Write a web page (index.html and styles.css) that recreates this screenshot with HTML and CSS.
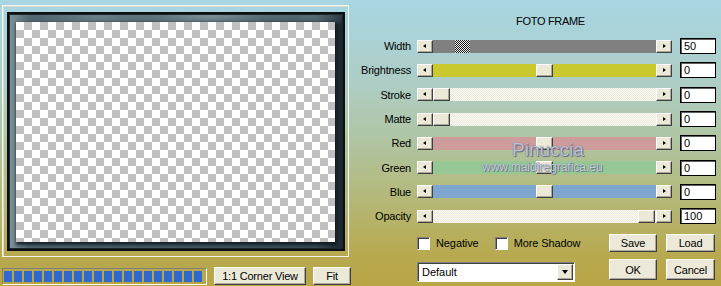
FILE: index.html
```html
<!DOCTYPE html>
<html lang="en">
<head>
    <meta charset="UTF-8">
    <meta name="viewport" content="width=device-width, initial-scale=1.0">
    <title>Foto Frame</title>
    <link rel="stylesheet" href="styles.css">
</head>
<body>
    <div class="app">
        <!-- preview on the left -->
        <section class="preview-pane">
            <div class="preview-box">
                <div class="frame">
                    <div class="checker"></div>
                </div>
            </div>
            <div class="preview-bar">
                <div class="progress">
                    <span></span><span></span><span></span><span></span><span></span>
                    <span></span><span></span><span></span><span></span><span></span>
                    <span></span><span></span><span></span><span></span><span></span>
                    <span></span><span></span><span></span><span></span><span></span>
                </div>
                <button class="btn btn-corner">1:1 Corner View</button>
                <button class="btn btn-fit">Fit</button>
            </div>
        </section>

        <!-- sliders on the right -->
        <section class="controls">
            <h1 class="title">FOTO FRAME</h1>
            <div class="sliders">
                <div class="row">
                    <label>Width</label>
                    <div class="slider">
                        <span class="arrow arrow-left"></span>
                        <div class="track track-gray"><span class="thumb thumb-focus" style="left: 22px;"></span></div>
                        <span class="arrow arrow-right"></span>
                    </div>
                    <div class="value">50</div>
                </div>
                <div class="row">
                    <label>Brightness</label>
                    <div class="slider">
                        <span class="arrow arrow-left"></span>
                        <div class="track track-yellow"><span class="thumb" style="left: 103px;"></span></div>
                        <span class="arrow arrow-right"></span>
                    </div>
                    <div class="value">0</div>
                </div>
                <div class="row">
                    <label>Stroke</label>
                    <div class="slider">
                        <span class="arrow arrow-left"></span>
                        <div class="track track-light"><span class="thumb" style="left: 0px;"></span></div>
                        <span class="arrow arrow-right"></span>
                    </div>
                    <div class="value">0</div>
                </div>
                <div class="row">
                    <label>Matte</label>
                    <div class="slider">
                        <span class="arrow arrow-left"></span>
                        <div class="track track-light"><span class="thumb" style="left: 0px;"></span></div>
                        <span class="arrow arrow-right"></span>
                    </div>
                    <div class="value">0</div>
                </div>
                <div class="row">
                    <label>Red</label>
                    <div class="slider">
                        <span class="arrow arrow-left"></span>
                        <div class="track track-red"><span class="thumb" style="left: 103px;"></span></div>
                        <span class="arrow arrow-right"></span>
                    </div>
                    <div class="value">0</div>
                </div>
                <div class="row">
                    <label>Green</label>
                    <div class="slider">
                        <span class="arrow arrow-left"></span>
                        <div class="track track-green"><span class="thumb" style="left: 103px;"></span></div>
                        <span class="arrow arrow-right"></span>
                    </div>
                    <div class="value">0</div>
                </div>
                <div class="row">
                    <label>Blue</label>
                    <div class="slider">
                        <span class="arrow arrow-left"></span>
                        <div class="track track-blue"><span class="thumb" style="left: 103px;"></span></div>
                        <span class="arrow arrow-right"></span>
                    </div>
                    <div class="value">0</div>
                </div>
                <div class="row">
                    <label>Opacity</label>
                    <div class="slider">
                        <span class="arrow arrow-left"></span>
                        <div class="track track-light"><span class="thumb" style="left: 205px;"></span></div>
                        <span class="arrow arrow-right"></span>
                    </div>
                    <div class="value">100</div>
                </div>
            </div>

            <div class="actions">
                <div class="checks">
                    <span class="check"><span class="box"></span>Negative</span>
                    <span class="check"><span class="box"></span>More Shadow</span>
                </div>
                <div class="buttons">
                    <button class="btn btn-small">Save</button>
                    <button class="btn btn-small btn-wide">Load</button>
                </div>
            </div>
            <div class="actions actions-last">
                <div class="dropdown">
                    <span>Default</span>
                    <span class="drop-arrow"></span>
                </div>
                <div class="buttons">
                    <button class="btn btn-big">OK</button>
                    <button class="btn btn-big btn-wide">Cancel</button>
                </div>
            </div>

            <div class="watermark">
                <div class="wm-name">Pinuccia</div>
                <div class="wm-url">www.maidiregrafica.eu</div>
            </div>
        </section>
    </div>
</body>
</html>
```

FILE: styles.css
```css
body {
    margin: 0;
    padding: 0;
    font-family: "Liberation Sans", Arial, sans-serif;
    font-size: 11px;
    color: #000;
    background: linear-gradient(to bottom, #a8d6e3 0%, #aecdc4 30%, #b0c4a0 50%, #b4b878 70%, #b8aa52 88%, #b9a545 100%);
    height: 286px;
    overflow: hidden;
}

.app {
    display: flex;
    width: 721px;
    height: 286px;
}

/* ---------- preview ---------- */
.preview-pane {
    width: 353px;
    padding: 5px 0 0 2px;
}

.preview-box {
    width: 338px;
    height: 239px;
    padding: 6px 3px 5px 4px;
    border: 1px solid #f2f5ee;
    box-shadow: inset 1px 1px 0 #d6dccf;
}

.frame {
    width: 319px;
    height: 220px;
    padding: 8px 8px 7px 7px;
    border: 2px solid #0b1013;
    box-shadow: inset 0 0 0 1px #1c262b;
    background:
        radial-gradient(ellipse 90px 12px at 200px 2px, rgba(140, 158, 166, 0.8), transparent),
        radial-gradient(ellipse 60px 10px at 90px 3px, rgba(120, 140, 150, 0.7), transparent),
        radial-gradient(ellipse 50px 10px at 300px 3px, rgba(110, 130, 140, 0.6), transparent),
        linear-gradient(to right, #7e949c 0%, #526872 6%, #465c66 50%, #384c56 92%, #1c272d 100%);
}

.checker {
    width: 319px;
    height: 220px;
    background: repeating-conic-gradient(#c0c0c0 0 25%, #ffffff 0 50%) 0 0 / 16px 16px;
    box-shadow: 1px 2px 3px 1px rgba(10, 18, 22, 0.8);
}

.preview-bar {
    display: flex;
    align-items: center;
    margin-top: 10px;
}

.progress {
    display: flex;
    gap: 2px;
    width: 202px;
    height: 13px;
    padding: 2px 0 0 1px;
    border: 1px solid;
    border-color: #808080 #ffffff #ffffff #808080;
}

.progress span {
    width: 8px;
    height: 11px;
    background-color: #2f68cf;
}

.btn {
    font-family: "Liberation Sans", Arial, sans-serif;
    font-size: 11px;
    letter-spacing: -0.2px;
    color: #000;
    background-color: #ece9d8;
    border: 1px solid;
    border-color: #ffffff #404040 #404040 #ffffff;
    box-shadow: inset -1px -1px 0 #aca899;
    padding: 0;
    cursor: pointer;
}

.btn-corner {
    width: 92px;
    height: 18px;
    margin-left: 7px;
}

.btn-fit {
    width: 38px;
    height: 18px;
    margin-left: 7px;
}

/* ---------- controls ---------- */
.controls {
    position: relative;
    flex: 1;
    padding-left: 5px;
}

.title {
    margin: 0;
    padding: 15px 0 0 156px;
    font-size: 11px;
    font-weight: normal;
    line-height: 13px;
    letter-spacing: -0.3px;
}

.sliders {
    margin-top: 6px;
}

.row {
    display: flex;
    align-items: center;
    height: 24.3px;
}

.row label {
    width: 51px;
    margin-right: 6px;
    text-align: right;
    letter-spacing: -0.2px;
}

.slider {
    display: flex;
    width: 255px;
    height: 13px;
}

.arrow {
    position: relative;
    box-sizing: border-box;
    width: 16px;
    height: 13px;
    background-color: #ece9d8;
    border: 1px solid;
    border-color: #ffffff #404040 #404040 #ffffff;
    box-shadow: inset -1px -1px 0 #aca899;
}

.arrow::after {
    content: "";
    position: absolute;
    top: 3px;
    width: 0;
    height: 0;
    border-top: 2.5px solid transparent;
    border-bottom: 2.5px solid transparent;
}

.arrow-left::after {
    left: 5px;
    border-right: 3px solid #000;
}

.arrow-right::after {
    left: 6px;
    border-left: 3px solid #000;
}

.track {
    position: relative;
    flex: 1;
    height: 13px;
}

.track-gray { background-color: #808080; }
.track-yellow { background-color: #c9c92e; }
.track-red { background-color: #cf9c9c; }
.track-green { background-color: #96c896; }
.track-blue { background-color: #7fa6ce; }
.track-light {
    background: repeating-conic-gradient(#ece8da 0 25%, #fbfaf5 0 50%) 0 0 / 2px 2px;
}

.thumb {
    position: absolute;
    top: 0;
    box-sizing: border-box;
    width: 17px;
    height: 13px;
    background-color: #ece9d8;
    border: 1px solid;
    border-color: #ffffff #404040 #404040 #ffffff;
    box-shadow: inset -1px -1px 0 #aca899;
}

.thumb-focus {
    width: 15px;
    border: none;
    box-shadow: none;
    background: repeating-conic-gradient(#1a1a1a 0 25%, #f0f0f0 0 50%) 0 0 / 2px 2px;
}

.value {
    box-sizing: border-box;
    width: 36px;
    height: 16px;
    margin-left: 8px;
    padding: 1px 0 0 3px;
    line-height: 13px;
    background-color: #fff;
    border: 1px solid #000;
    box-shadow: inset 1px 1px 0 #606060;
}

/* ---------- bottom buttons ---------- */
.actions {
    display: flex;
    align-items: center;
    height: 18px;
    margin-top: 6px;
    padding-left: 57px;
    padding-right: 6px;
}

.actions-last {
    align-items: flex-start;
    height: 23px;
    margin-top: 7px;
}

.checks {
    display: flex;
    align-items: center;
}

.check {
    display: flex;
    align-items: center;
    gap: 6px;
    margin-right: 16px;
    letter-spacing: -0.1px;
}

.box {
    box-sizing: border-box;
    width: 13px;
    height: 13px;
    background-color: #fff;
    border: 1px solid;
    border-color: #808080 #ffffff #ffffff #808080;
    box-shadow: inset 1px 1px 0 #404040;
}

.buttons {
    display: flex;
    gap: 9px;
    margin-left: auto;
}

.btn-small {
    width: 48px;
    height: 18px;
}

.btn-big {
    width: 48px;
    height: 21px;
}

.btn-wide {
    width: 49px;
}

.dropdown {
    position: relative;
    box-sizing: border-box;
    width: 158px;
    height: 20px;
    margin-top: 3px;
    padding: 3px 0 0 4px;
    line-height: 13px;
    background-color: #fff;
    border: 1px solid;
    border-color: #808080 #ffffff #ffffff #808080;
    box-shadow: inset 1px 1px 0 #404040;
}

.drop-arrow {
    position: absolute;
    top: 1px;
    right: 1px;
    box-sizing: border-box;
    width: 16px;
    height: 16px;
    background-color: #ece9d8;
    border: 1px solid;
    border-color: #ffffff #404040 #404040 #ffffff;
    box-shadow: inset -1px -1px 0 #aca899;
}

.drop-arrow::after {
    content: "";
    position: absolute;
    top: 5px;
    left: 4px;
    border-left: 3.5px solid transparent;
    border-right: 3.5px solid transparent;
    border-top: 4px solid #000;
}

/* watermark over the sliders */
.watermark {
    position: absolute;
    top: 140px;
    left: 127px;
    pointer-events: none;
}

.wm-name {
    margin-left: 30px;
    font-size: 19px;
    line-height: 20px;
    color: rgba(200, 204, 226, 0.9);
    text-shadow: 0 0 1px #55607a, 1px 1px 1px rgba(80, 90, 110, 0.8);
}

.wm-url {
    margin-top: 1px;
    font-size: 12px;
    line-height: 13px;
    color: rgba(214, 216, 232, 0.9);
    text-shadow: 0 0 1px #5a6478, 1px 1px 0 rgba(80, 90, 110, 0.6);
}
```
